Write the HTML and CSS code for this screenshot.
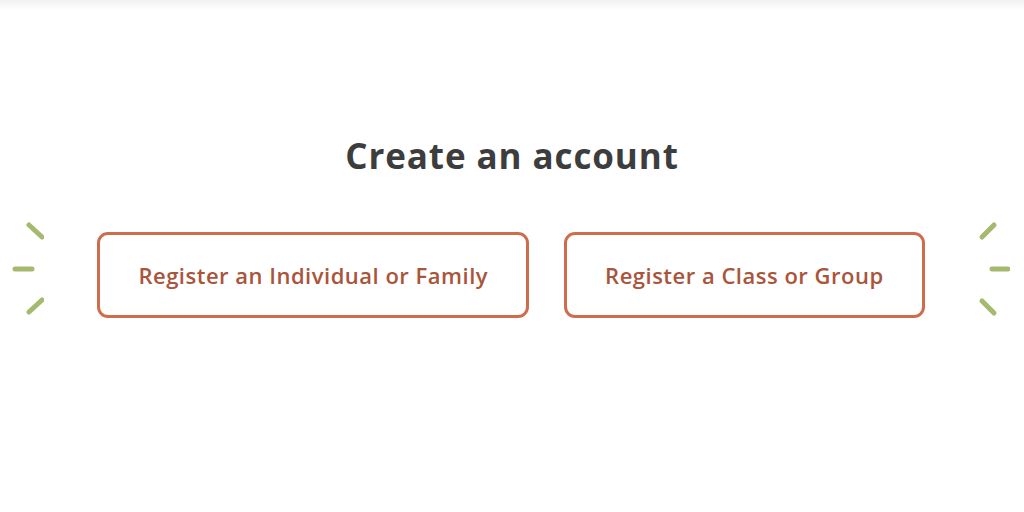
FILE: index.html
```html
<!DOCTYPE html>
<html lang="en">
<head>
  <meta charset="UTF-8">
  <meta name="viewport" content="width=device-width, initial-scale=1.0">
  <link rel="stylesheet" href="styles.css">
</head>
<body>
  <div class="topbar"></div>
  <main class="signup">
    <h1>Create an account</h1>
    <div class="choice-row">
      <svg class="burst" width="32" height="100" viewBox="0 0 32 100">
        <line x1="17" y1="7" x2="30" y2="19" />
        <line x1="3" y1="51" x2="20" y2="51" />
        <line x1="17" y1="94" x2="30" y2="82" />
      </svg>
      <div class="choices">
        <a href="#" class="choice">Register an Individual or Family</a>
        <a href="#" class="choice">Register a Class or Group</a>
      </div>
      <svg class="burst" width="32" height="100" viewBox="0 0 32 100">
        <line x1="4" y1="19" x2="16" y2="7" />
        <line x1="14" y1="51" x2="30" y2="51" />
        <line x1="4" y1="83" x2="16" y2="95" />
      </svg>
    </div>
  </main>
</body>
</html>
```

FILE: styles.css
```css
body {
  margin: 0;
  background: #fff;
  font-family: "Open Sans", Lato, sans-serif;
}

.topbar {
  height: 10px;
  background: linear-gradient(#f1f1f1, #fff);
}

.signup {
  padding-top: 122px;
}

h1 {
  margin: 0 0 52px;
  text-align: center;
  font-size: 35px;
  font-weight: 700;
  color: #3d3d3d;
  line-height: 48px;
  letter-spacing: 0.9px;
}

.choice-row {
  display: grid;
  grid-template-columns: 32px 1fr 32px;
  align-items: start;
  padding: 0 14px 0 12px;
}

.choices {
  display: flex;
  justify-content: center;
  gap: 35px;
}

.choice {
  display: flex;
  align-items: center;
  height: 80px;
  padding: 0 38px;
  border: 3px solid #cd6d4c;
  border-radius: 11px;
  color: #a9543b;
  font-size: 22px;
  font-weight: 600;
  letter-spacing: 0.5px;
  text-decoration: none;
}

.burst {
  margin-top: -14px;
}

.burst line {
  stroke: #a5b96f;
  stroke-width: 5;
  stroke-linecap: round;
}
```
